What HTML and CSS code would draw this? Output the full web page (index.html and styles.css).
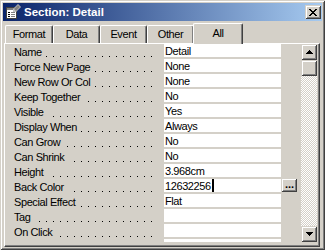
FILE: index.html
```html
<!DOCTYPE html>
<html>
<head>
<meta charset="utf-8">
<link rel="stylesheet" href="styles.css">
</head>
<body>
<div class="win">
  <div class="title">
    <svg class="ico" width="16" height="16" viewBox="0 0 16 16" shape-rendering="crispEdges">
      <rect x="1" y="3" width="11" height="12" fill="#404040"/>
      <rect x="2" y="4" width="9" height="10" fill="#fff"/>
      <rect x="2" y="4" width="9" height="2" fill="#808080"/>
      <path d="M3 8h2v1H3zM3 10h2v1H3zM3 12h2v1H3z" fill="#000"/>
      <path d="M6 8h4v1H6zM6 10h4v1H6zM6 12h4v1H6z" fill="#808080"/>
      <path d="M8 5l5-5 3 3-5 5-3 0z" fill="#C0C0C0" shape-rendering="auto"/>
      <path d="M9 5l4-4 2 2-4 4z" fill="#808080" shape-rendering="auto"/>
    </svg>
    <span class="ttl">Section: Detail</span>
    <div class="xbtn">
      <svg width="8" height="7" viewBox="0 0 8 7" shape-rendering="crispEdges"><path d="M0 0h2v1H0zM6 0h2v1H6zM1 1h2v1H1zM5 1h2v1H5zM2 2h4v1H2zM3 3h2v1H3zM2 4h4v1H2zM1 5h2v1H1zM5 5h2v1H5zM0 6h2v1H0zM6 6h2v1H6z" fill="#000"/></svg>
    </div>
  </div>
  <div class="tabs">
    <div class="tab first">Format</div>
    <div class="tab">Data</div>
    <div class="tab">Event</div>
    <div class="tab">Other</div>
    <div class="tab sel">All</div>
  </div>
  <div class="panel">
    <div class="list">
      <div class="rows">
        <div class="row"><div class="lab"><span>Name</span></div><div class="val">Detail</div></div>
        <div class="row"><div class="lab"><span>Force New Page</span></div><div class="val">None</div></div>
        <div class="row"><div class="lab"><span>New Row Or Col</span></div><div class="val">None</div></div>
        <div class="row"><div class="lab"><span>Keep Together</span></div><div class="val">No</div></div>
        <div class="row"><div class="lab"><span>Visible</span></div><div class="val">Yes</div></div>
        <div class="row"><div class="lab"><span>Display When</span></div><div class="val">Always</div></div>
        <div class="row"><div class="lab"><span>Can Grow</span></div><div class="val">No</div></div>
        <div class="row"><div class="lab"><span>Can Shrink</span></div><div class="val">No</div></div>
        <div class="row"><div class="lab"><span>Height</span></div><div class="val">3.968cm</div></div>
        <div class="row"><div class="lab"><span>Back Color</span></div><div class="val">12632256<span class="caret"></span></div><div class="more">...</div></div>
        <div class="row"><div class="lab"><span>Special Effect</span></div><div class="val">Flat</div></div>
        <div class="row"><div class="lab"><span>Tag</span></div><div class="val"></div></div>
        <div class="row"><div class="lab"><span>On Click</span></div><div class="val"></div></div>
        <div class="row"><div class="lab"></div><div class="val"></div></div>
      </div>
      <div class="vscroll">
        <div class="sbtn"><svg width="7" height="4" viewBox="0 0 7 4" shape-rendering="crispEdges"><path d="M3 0h1v1H3zM2 1h3v1H2zM1 2h5v1H1zM0 3h7v1H0z" fill="#000"/></svg></div>
        <div class="thumb"></div>
        <div class="track"></div>
        <div class="sbtn"><svg width="7" height="4" viewBox="0 0 7 4" shape-rendering="crispEdges"><path d="M0 0h7v1H0zM1 1h5v1H1zM2 2h3v1H2zM3 3h1v1H3z" fill="#000"/></svg></div>
      </div>
    </div>
  </div>
</div>
</body>
</html>
```
FILE: styles.css
```css
* { box-sizing: border-box; }
body {
  margin: 0;
  background: #D4D0C8;
  font-family: "Liberation Sans", Arial, sans-serif;
  font-size: 11px;
  letter-spacing: -0.4px;
  color: #000;
}
.win {
  width: 325px;
  height: 250px;
  padding: 3px;
  background: #D4D0C8;
  box-shadow: inset 1px 1px 0 #D4D0C8, inset -1px -1px 0 #404040, inset 2px 2px 0 #fff, inset -2px -2px 0 #808080;
  display: flex;
  flex-direction: column;
  overflow: hidden;
}
.title {
  height: 18px;
  flex: none;
  display: flex;
  align-items: center;
  padding-left: 2px;
  padding-right: 1px;
  background: linear-gradient(to right, #0A246A, #A6CAF0);
  color: #fff;
}
.ico { flex: none; }
.ttl {
  flex: 1;
  margin-left: 3px;
  font-weight: bold;
  font-size: 11.5px;
  letter-spacing: 0;
}
.xbtn {
  width: 16px;
  height: 14px;
  background: #D4D0C8;
  box-shadow: inset 1px 1px 0 #D4D0C8, inset -1px -1px 0 #404040, inset 2px 2px 0 #fff, inset -2px -2px 0 #808080;
  display: flex;
  align-items: center;
  justify-content: center;
  padding-right: 1px;
}
.xbtn svg { display: block; }
.tabs {
  flex: none;
  height: 20px;
  margin-top: 2px;
  padding-left: 2px;
  display: flex;
  align-items: flex-end;
  position: relative;
  z-index: 2;
}
.tab {
  width: 47px;
  height: 18px;
  background: #D4D0C8;
  border-top: 1px solid #fff;
  border-left: 1px solid #fff;
  border-right: 1px solid #404040;
  border-radius: 2px 2px 0 0;
  box-shadow: inset -1px 0 0 #808080;
  text-align: center;
  line-height: 16px;
}
.tab.first { width: 48px; }
.tab.sel {
  width: 50px;
  height: 21px;
  margin-left: -1px;
  margin-bottom: -1px;
  padding-top: 1px;
}
.panel {
  flex: 1;
  margin-left: 1px;
  margin-right: 2px;
  border-top: 1px solid #fff;
  border-left: 1px solid #fff;
  border-right: 1px solid #404040;
  border-bottom: 1px solid #404040;
  box-shadow: inset -1px -1px 0 #808080;
  display: flex;
  flex-direction: column;
}
.list {
  height: 198px;
  display: flex;
  overflow: hidden;
}
.rows {
  width: 296px;
  flex: none;
}
.row {
  height: 15px;
  display: flex;
}
.lab {
  width: 159px;
  flex: none;
  height: 15px;
  padding: 1px 8px 0 9px;
  line-height: 14px;
  white-space: nowrap;
  background-image: linear-gradient(to right, #000 0 1px, transparent 1px 7px);
  background-size: 7px 1px;
  background-repeat: repeat-x;
  background-position: 6px 12px;
  background-origin: border-box;
  background-clip: content-box;
}
.lab span {
  background: #D4D0C8;
  padding-right: 4px;
}
.val {
  width: 117px;
  flex: none;
  height: 13px;
  background: #fff;
  padding: 1px 0 0 1px;
  line-height: 13px;
  white-space: nowrap;
}
.caret {
  display: inline-block;
  width: 2px;
  height: 13px;
  background: #000;
  vertical-align: top;
  margin-top: -1px;
  margin-left: 1px;
}
.more {
  width: 15px;
  height: 13px;
  margin-left: 1px;
  background: #D4D0C8;
  box-shadow: inset -1px -1px 0 #404040, inset 1px 1px 0 #fff, inset -2px -2px 0 #808080;
  font-weight: bold;
  letter-spacing: 0;
  text-align: center;
  line-height: 11px;
  font-size: 11px;
}
.vscroll {
  width: 16px;
  flex: none;
  display: flex;
  flex-direction: column;
}
.sbtn, .thumb {
  height: 16px;
  flex: none;
  background: #D4D0C8;
  box-shadow: inset 1px 1px 0 #D4D0C8, inset -1px -1px 0 #404040, inset 2px 2px 0 #fff, inset -2px -2px 0 #808080;
  display: flex;
  align-items: center;
  justify-content: center;
}
.sbtn svg { display: block; }
.track {
  flex: 1;
  background-image: repeating-conic-gradient(#fff 0 25%, #D4D0C8 0 50%);
  background-size: 2px 2px;
}
```
